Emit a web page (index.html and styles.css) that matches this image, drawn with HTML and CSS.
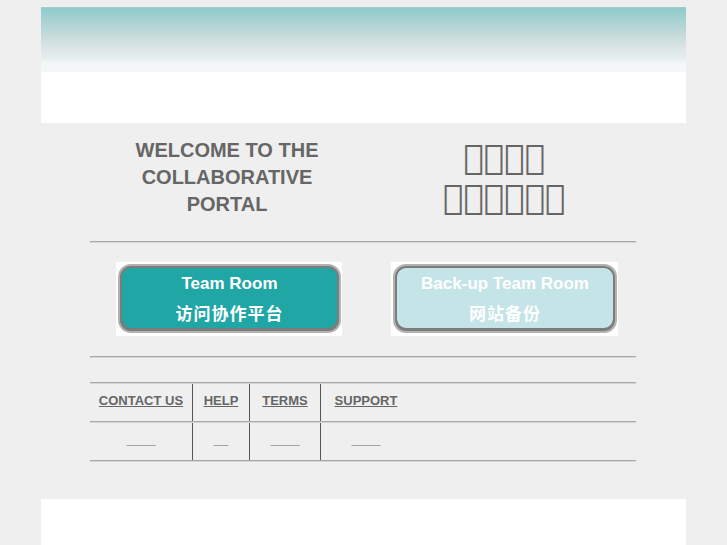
FILE: index.html
```html
<!DOCTYPE html>
<html>
<head>
  <meta charset="utf-8">
  <title>Collaborative Portal</title>
  <link rel="stylesheet" href="styles.css">
</head>
<body>
  <!-- Banner -->
  <div class="banner"></div>

  <div class="main">
    <!-- Welcome -->
    <div class="intro">
      <h1 class="welcome">WELCOME TO THE<br>COLLABORATIVE<br>PORTAL</h1>
      <p class="cn-title">&#xE000;&#xE001;&#xE002;&#xE003;<br>&#xE004;&#xE005;&#xE006;&#xE007;&#xE008;&#xE009;</p>
    </div>

    <hr class="rule">

    <!-- Entry buttons -->
    <div class="entries">
      <div class="entry entry-left">
        <a class="btn btn-main" href="#">
          <span class="btn-en">Team Room</span>
          <span class="btn-cn">访问协作平台</span>
        </a>
      </div>
      <div class="entry entry-right">
        <a class="btn btn-backup" href="#">
          <span class="btn-en">Back-up Team Room</span>
          <span class="btn-cn">网站备份</span>
        </a>
      </div>
    </div>

    <hr class="rule">

    <!-- Links -->
    <div class="links">
      <div class="links-row">
        <div class="cell cell-1"><a href="#">CONTACT US</a></div>
        <div class="cell cell-2"><a href="#">HELP</a></div>
        <div class="cell cell-3"><a href="#">TERMS</a></div>
        <div class="cell cell-4"><a href="#">SUPPORT</a></div>
      </div>
      <div class="links-row">
        <div class="cell cell-1"><span class="blank">____</span></div>
        <div class="cell cell-2"><span class="blank">__</span></div>
        <div class="cell cell-3"><span class="blank">____</span></div>
        <div class="cell cell-4"><span class="blank">____</span></div>
      </div>
    </div>
  </div>

  <div class="footer"></div>
</body>
</html>
```

FILE: styles.css
```css
* {
  box-sizing: border-box;
}

html, body {
  overflow: hidden;
}

body {
  margin: 0;
  background-color: #efefef;
  font-family: "Liberation Sans", Arial, sans-serif;
}

.banner {
  height: 116px;
  margin: 7px 41px 0;
  background:
    linear-gradient(#9fcfcf 0, #8fcbcb 2px, #a5d1d1 12px, #c2d9d9 26px, #d9e5e5 40px, #e5eced 50px, #f3f6f6 56px, #f5f8f8 65px, #ffffff 65px);
}

.main {
  width: 546px;
  margin-left: 90px;
}

.intro {
  display: grid;
  grid-template-columns: 274px 1fr;
  height: 118px;
  padding-top: 14px;
}

.welcome {
  margin: 0;
  font-size: 20px;
  line-height: 27px;
  font-weight: bold;
  color: #666;
  text-align: center;
}

.cn-title {
  margin: 0;
  padding-left: 8px;
  font-family: "DejaVu Sans", sans-serif;
  font-size: 34px;
  line-height: 40px;
  color: #666;
  text-align: center;
}

.rule {
  margin: 0;
  height: 2px;
  border: none;
  border-top: 1px solid #a9a9a9;
  border-left: 1px solid #a9a9a9;
  border-bottom: 1px solid #d6d6d6;
}

.entries {
  display: grid;
  grid-template-columns: 278px 1fr;
  padding: 19px 0 20px;
}

.entry {
  justify-self: center;
  width: 226px;
  height: 74px;
  padding: 2px 1px 3px 2px;
  background-color: #fff;
}

.entry-right {
  width: 227px;
  margin-left: 5px;
}

.btn {
  display: flex;
  flex-direction: column;
  align-items: center;
  height: 100%;
  padding-top: 7px;
  border: 2px solid #b2b2b2;
  border-radius: 13px;
  box-shadow: inset 0 0 0 2px #7c7c7c, inset 0 -1px 0 2px #7c7c7c;
  color: #fff;
  text-decoration: none;
  font-weight: bold;
}

.btn-main {
  background-color: #21a6a6;
}

.btn-backup {
  background-color: #c4e4e8;
}

.btn-en {
  font-size: 17px;
  line-height: 22px;
  margin-bottom: 5px;
}

.btn-cn {
  font-family: "Noto Sans CJK SC", sans-serif;
  font-size: 17px;
  line-height: 26px;
  letter-spacing: 1px;
}

.links {
  margin-top: 24px;
  border-bottom: 1px solid #d6d6d6;
}

.links-row {
  display: flex;
  height: 39px;
  border-top: 1px solid #a9a9a9;
  box-shadow: inset 0 1px 0 #d6d6d6;
}

.links-row:last-child {
  border-bottom: 1px solid #a9a9a9;
  height: 40px;
}

.cell {
  display: flex;
  align-items: center;
  justify-content: center;
  margin-top: 1px;
  padding-bottom: 4px;
  font-size: 13px;
  font-weight: bold;
}

.cell-1 { width: 103px; border-right: 1px solid #555; }
.cell-2 { width: 57px; border-right: 1px solid #555; }
.cell-3 { width: 71px; border-right: 1px solid #555; }
.cell-4 { width: 90px; }

.cell a {
  color: #666;
  text-decoration: underline;
}

.blank {
  color: #666;
}

.footer {
  height: 47px;
  margin: 37px 41px 0;
  background-color: #fff;
}
```
